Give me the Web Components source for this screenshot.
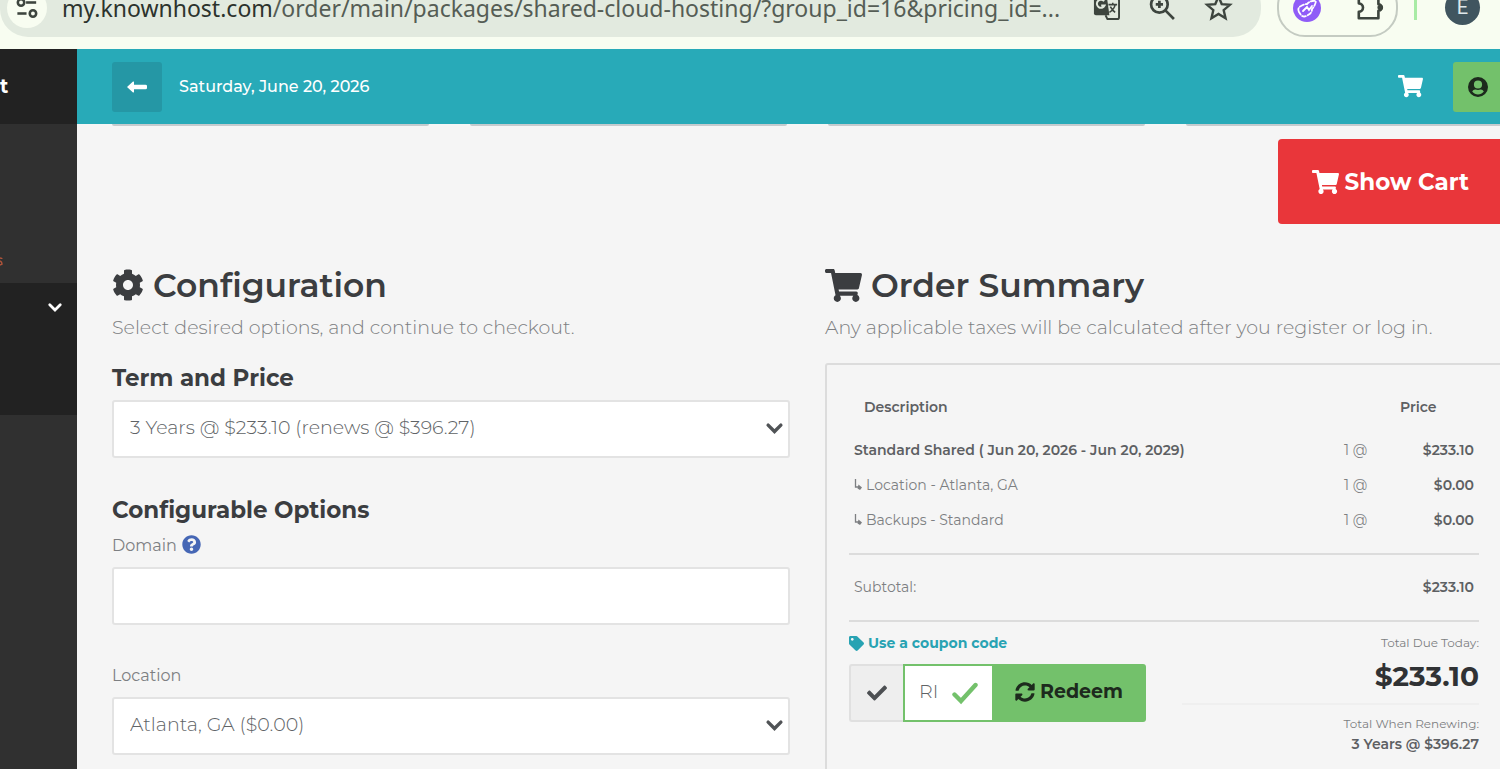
<!DOCTYPE html>
<html lang="en">
<head>
<meta charset="utf-8">
<title>Shared Cloud Hosting - Order</title>
<style>
    html, body {
        margin: 0;
        height: 100%;
    }

    body {
        display: flex;
        flex-direction: column;
        overflow: hidden;
        background: #f5f5f5;
        color: #7d7f82;
        font-family: Montserrat, Inter, "Liberation Sans", sans-serif;
        font-size: 14px;
        font-weight: 400;
    }
</style>
</head>
<body>
<browser-bar></browser-bar>
<order-page>
    <side-nav slot="side"></side-nav>
    <top-bar slot="top">Saturday, June 20, 2026</top-bar>
    <config-panel></config-panel>
    <order-summary></order-summary>
</order-page>

<script>
const ICONS = {
    cart: ['0 0 576 512', '<path d="M528.12 301.319l47.273-208C578.806 78.301 567.391 64 551.99 64H159.208l-9.166-44.81C147.758 8.021 137.93 0 126.529 0H24C10.745 0 0 10.745 0 24v16c0 13.255 10.745 24 24 24h69.883l70.248 343.435C147.325 417.1 136 435.222 136 456c0 30.928 25.072 56 56 56s56-25.072 56-56c0-15.674-6.447-29.835-16.824-40h209.647C430.447 426.165 424 440.326 424 456c0 30.928 25.072 56 56 56s56-25.072 56-56c0-22.172-12.888-41.332-31.579-50.405l5.517-24.276c3.413-15.018-8.002-29.319-23.403-29.319H218.117l-6.545-32h293.145c11.206 0 20.92-7.754 23.403-18.681z"/>'],
    cog: ['0 0 512 512', '<path d="M487.4 315.7l-42.6-24.6c4.3-23.2 4.3-47 0-70.2l42.6-24.6c4.9-2.8 7.1-8.6 5.5-14-11.1-35.6-30-67.8-54.7-94.6-3.8-4.1-10-5.1-14.8-2.3L380.8 110c-17.9-15.4-38.5-27.3-60.8-35.1V25.8c0-5.6-3.9-10.5-9.4-11.7-36.7-8.2-74.3-7.8-109.2 0-5.5 1.2-9.4 6.1-9.4 11.7V75c-22.2 7.9-42.8 19.8-60.8 35.1L88.7 85.5c-4.9-2.8-11-1.9-14.8 2.3-24.7 26.7-43.6 58.9-54.7 94.6-1.7 5.4.6 11.2 5.5 14L67.3 221c-4.3 23.2-4.3 47 0 70.2l-42.6 24.6c-4.9 2.8-7.1 8.6-5.5 14 11.1 35.6 30 67.8 54.7 94.6 3.8 4.1 10 5.1 14.8 2.3l42.6-24.6c17.9 15.4 38.5 27.3 60.8 35.1v49.2c0 5.6 3.9 10.5 9.4 11.7 36.7 8.2 74.3 7.8 109.2 0 5.5-1.2 9.4-6.1 9.4-11.7v-49.2c22.2-7.9 42.8-19.8 60.8-35.1l42.6 24.6c4.9 2.8 11 1.9 14.8-2.3 24.7-26.7 43.6-58.9 54.7-94.6 1.5-5.5-.7-11.3-5.6-14.1zM256 336c-44.1 0-80-35.9-80-80s35.9-80 80-80 80 35.9 80 80-35.9 80-80 80z"/>'],
    tag: ['0 0 512 512', '<path d="M0 252.118V48C0 21.49 21.49 0 48 0h204.118a48 48 0 0 1 33.941 14.059l211.882 211.882c18.745 18.745 18.745 49.137 0 67.882L293.823 497.941c-18.745 18.745-49.137 18.745-67.882 0L14.059 286.059A48 48 0 0 1 0 252.118zM112 64c-26.51 0-48 21.49-48 48s21.49 48 48 48 48-21.49 48-48-21.49-48-48-48z"/>'],
    check: ['0 0 512 512', '<path d="M173.898 439.404l-166.4-166.4c-9.997-9.997-9.997-26.206 0-36.204l36.203-36.204c9.997-9.998 26.207-9.998 36.204 0L192 312.69 432.095 72.596c9.997-9.997 26.207-9.997 36.204 0l36.203 36.204c9.997 9.997 9.997 26.206 0 36.204l-294.4 294.401c-9.998 9.997-26.207 9.997-36.204-.001z"/>'],
    help: ['0 0 512 512', '<path d="M504 256c0 136.997-111.043 248-248 248S8 392.997 8 256C8 119.083 119.043 8 256 8s248 111.083 248 248zM262.655 90c-54.497 0-89.255 22.957-116.549 63.758-3.536 5.286-2.353 12.415 2.715 16.258l34.699 26.31c5.205 3.947 12.621 3.008 16.665-2.122 17.864-22.658 30.113-35.797 57.303-35.797 20.429 0 45.698 13.148 45.698 32.958 0 14.976-12.363 22.667-32.534 33.976C247.128 238.528 216 254.941 216 296v4c0 6.627 5.373 12 12 12h56c6.627 0 12-5.373 12-12v-1.333c0-28.462 83.186-29.647 83.186-106.667 0-58.002-60.165-102-116.531-102zM256 338c-25.365 0-46 20.635-46 46 0 25.364 20.635 46 46 46s46-20.636 46-46c0-25.365-20.635-46-46-46z"/>'],
    sync: ['0 0 512 512', '<path d="M370.72 133.28C339.458 104.008 298.888 87.962 255.848 88c-77.458.068-144.328 53.178-162.791 126.85-1.344 5.363-6.122 9.15-11.651 9.15H24.103c-7.498 0-13.194-6.807-11.807-14.176C33.933 94.924 134.813 8 256 8c66.448 0 126.791 26.136 171.315 68.685L463.03 40.97C478.149 25.851 504 36.559 504 57.941V192c0 13.255-10.745 24-24 24H345.941c-21.382 0-32.09-25.851-16.971-40.971l41.75-41.749zM32 296h134.059c21.382 0 32.09 25.851 16.971 40.971l-41.75 41.75c31.262 29.273 71.835 45.319 114.876 45.28 77.418-.07 144.315-53.144 162.787-126.849 1.344-5.363 6.122-9.15 11.651-9.15h57.304c7.498 0 13.194 6.807 11.807 14.176C478.067 417.076 377.187 504 256 504c-66.448 0-126.791-26.136-171.315-68.685L48.97 471.03C33.851 486.149 8 475.441 8 454.059V320c0-13.255 10.745-24 24-24z"/>'],
    user: ['0 0 20 20', '<path fill-rule="evenodd" d="M10 0a10 10 0 1 0 0 20 10 10 0 0 0 0-20zM10 3.4a4.1 4.1 0 1 1 0 8.2 4.1 4.1 0 0 1 0-8.2zM4.2 14.6c.8-1.5 2-2.3 3.3-2.1 1.600.5 3.400.5 5 0 1.300-.2 2.500.6 3.300 2.100-3 4-8.600 4-11.600 0z"/>'],
    back: ['0 0 20 12', '<path d="M0 6L6 .6q1-.6 1 .6v2.600h11.500q1.500 0 1.500 1.200v2q0 1.200-1.500 1.200H7v2.600q0 1.200-1 .6z"/>'],
    down: ['0 0 16 10', '<path d="M2 2l6 6 6-6" fill="none" stroke="currentColor" stroke-width="3.200" stroke-linecap="round"/>'],
    tick: ['0 0 26 22', '<path d="M2.500 12.500l6.500 6.500L23.500 3" fill="none" stroke="currentColor" stroke-width="4.400" stroke-linecap="round"/>'],
    tune: ['0 0 24 24', '<g fill="none" stroke="currentColor" stroke-width="2.800"><circle cx="5.500" cy="6" r="3.500"/><path d="M11 6h11"/><path d="M1.500 18h10"/><circle cx="18.500" cy="18" r="3.500"/></g>'],
    translate: ['0 0 28 28', '<path d="M1 0h13l3 22H3q-2 0-2-2z"/><path d="M12 5h13q2 0 2 2v17q0 2-2 2H15l-2-4" fill="none" stroke="currentColor" stroke-width="2"/><path d="M11.500 7.500A4.200 4.200 0 1 0 12 12H8.500" fill="none" stroke="#e2eadf" stroke-width="2"/><path d="M16 11h9M20.500 9v2M23 11q-1 5-6 8M18 13q2 4 5 6" fill="none" stroke="currentColor" stroke-width="1.600"/>'],
    zoom: ['0 0 26 26', '<g fill="none" stroke="currentColor" stroke-width="2.600"><circle cx="10" cy="10" r="8"/><path d="M16 16l8 8M6.500 10h7M10 6.500v7"/></g>'],
    star: ['0 0 26 26', '<path d="M13 2.500l3.100 7.200 7.900.7-6 5.200 1.800 7.700L13 19.200l-6.800 4.100L8 15.600l-6-5.200 7.900-.7z" fill="none" stroke="currentColor" stroke-width="2.300"/>'],
    rocket: ['0 0 28 28', '<circle cx="14" cy="14" r="14" fill="#8f5cf7"/><g fill="none" stroke="#fff" stroke-width="1.800" stroke-linecap="round"><path d="M6 18q-2-4 2-6 3-2 6-2 4-4 9-3-1 5-4 8 0 4-4 6-4 3-7 0z" stroke-dasharray="4 2"/><path d="M10 17l4-4 2 3 3-4"/></g>'],
    puzzle: ['0 0 30 30', '<path d="M3 2h21v9a3 3 0 0 1 0 7v8H3v-7a4 4 0 0 0 0-9z" fill="none" stroke="currentColor" stroke-width="2.800" stroke-linejoin="round"/><circle cx="26" cy="14.500" r="3"/>'],
    speck: ['0 0 3 9', '<path d="M0 1q2 0 2 1M0 4q2 1 2 3l-2 1" fill="none" stroke="#b0543a" stroke-width="1.500"/>'],
    child: ['0 0 8 11', '<path d="M1.500 0v8H5" fill="none" stroke="currentColor" stroke-width="1.300"/><path d="M4.500 5.500L8 8.500 6 11 3.500 9.500z"/>']
}

class UiIcon extends HTMLElement {
    connectedCallback() {
        if (this.shadowRoot) return
        const [box, shape] = ICONS[this.getAttribute('name')]
        this.attachShadow({ mode: 'open' }).innerHTML = `
            <style>
                :host { display: block; flex: none; width: 20px; }
                svg { display: block; width: 100%; fill: currentColor; overflow: visible; }
            </style>
            <svg viewBox="${box}" aria-hidden="true">${shape}</svg>
        `
    }
}

// Base for the elements whose shadow root is one fixed piece of markup
class Component extends HTMLElement {
    connectedCallback() {
        if (this.shadowRoot) return
        this.attachShadow({ mode: 'open' }).innerHTML = `
            <style>
                *, :host { box-sizing: border-box; }
                button { font: inherit; color: inherit; border: 0; padding: 0; cursor: pointer; }
            </style>
            ${this.render()}
        `
    }
}

class BrowserBar extends Component {
    render() {
        return `
            <style>
                :host {
                    display: flex;
                    flex: none;
                    align-items: flex-end;
                    height: 49px;
                    padding: 0 20px 12px 0;
                    overflow: hidden;
                    background: #f8fdf1;
                    color: #3d453e;
                }
                button { display: block; flex: none; background: none; }
                .address {
                    flex: 1;
                    min-width: 0;
                    height: 59px;
                    display: flex;
                    align-items: center;
                    gap: 29px;
                    padding: 0 29px 0 7px;
                    border-radius: 0 28px 28px 28px;
                    background: #e2eadf;
                }
                .info {
                    display: grid;
                    place-items: center;
                    width: 40px;
                    height: 40px;
                    border-radius: 50%;
                    background: #f8fdf1;
                }
                .url {
                    flex: 1;
                    min-width: 0;
                    margin-left: -14px;
                    color: #555d55;
                    font: 400 23px/34px "Noto Sans", "Open Sans", sans-serif;
                    white-space: nowrap;
                }
                .url b { font-weight: 400; color: #2c332d; }
                .address ui-icon { width: 27px; }
                .address .info ui-icon { width: 22px; }
                .extensions {
                    display: flex;
                    flex: none;
                    align-items: center;
                    justify-content: space-between;
                    width: 121px;
                    height: 59px;
                    margin: 0 16px;
                    padding: 0 12px 0 14px;
                    border: 2px solid #c4cbc2;
                    border-radius: 28px;
                }
                .extensions ui-icon { width: 28px; }
                .line { width: 3px; height: 40px; margin: 0 28px 17px 0; background: #a8eba5; }
                .avatar {
                    width: 35px;
                    height: 35px;
                    margin-bottom: 12px;
                    border-radius: 50%;
                    background: #40555f;
                    color: #dfe8ea;
                    font: 400 20px/35px Roboto, sans-serif;
                }
            </style>
            <div class="address">
                <button class="info" aria-label="Site information"><ui-icon name="tune"></ui-icon></button>
                <div class="url"><b>my.knownhost.com</b>/order/main/packages/shared-cloud-hosting/?group_id=16&amp;pricing_id=...</div>
                <button aria-label="Translate"><ui-icon name="translate"></ui-icon></button>
                <button aria-label="Zoom"><ui-icon name="zoom"></ui-icon></button>
                <button aria-label="Bookmark"><ui-icon name="star"></ui-icon></button>
            </div>
            <div class="extensions">
                <button aria-label="Extension"><ui-icon name="rocket"></ui-icon></button>
                <button aria-label="Extensions"><ui-icon name="puzzle"></ui-icon></button>
            </div>
            <div class="line"></div>
            <button class="avatar">E</button>
        `
    }
}

class OrderPage extends Component {
    render() {
        return `
            <style>
                :host {
                    display: grid;
                    flex: 1;
                    min-height: 0;
                    grid-template-columns: 77px minmax(0, 1fr);
                    grid-template-rows: 75px minmax(0, 1fr);
                }
                slot[name=side]::slotted(*) { grid-row: 1 / 3; }
                main { margin-right: -3px; padding-left: 35px; }
                .cards, .panels { display: grid; }
                .cards { grid-template-columns: repeat(4, 1fr); gap: 41px; }
                .cards div { height: 2px; border-radius: 0 0 4px 4px; background: #c5cbce; }
                .panels { grid-template-columns: repeat(2, minmax(0, 1fr)); gap: 35px; }
                .actions { display: flex; justify-content: flex-end; margin: 13px 0 42px; }
                .show {
                    display: flex;
                    align-items: center;
                    gap: 6px;
                    height: 85px;
                    padding: 0 34px;
                    border-radius: 4px;
                    background: #e9363a;
                    color: #fff;
                    font-size: 23px;
                    font-weight: 700;
                }
                .show ui-icon { width: 27px; }
            </style>
            <slot name="side"></slot>
            <slot name="top"></slot>
            <main>
                <div class="cards"><div></div><div></div><div></div><div></div></div>
                <div class="actions">
                    <button class="show"><ui-icon name="cart"></ui-icon>Show Cart</button>
                </div>
                <div class="panels"><slot></slot></div>
            </main>
        `
    }
}

class SideNav extends Component {
    render() {
        return `
            <style>
                :host { display: block; overflow: hidden; background: #303030; }
                .logo {
                    height: 75px;
                    background: #222;
                    color: #fff;
                    font-size: 19px;
                    font-weight: 700;
                    line-height: 75px;
                }
                .links { display: flex; align-items: flex-end; height: 159px; padding-bottom: 17px; }
                .links ui-icon { width: 3px; }
                .group {
                    display: flex;
                    justify-content: flex-end;
                    align-items: flex-start;
                    height: 132px;
                    padding: 20px 15px;
                    background: #222;
                    color: #fff;
                }
                .group button { background: none; }
                .group ui-icon { width: 14px; }
            </style>
            <div class="logo">t</div>
            <div class="links"><ui-icon name="speck"></ui-icon></div>
            <div class="group"><button aria-label="Toggle menu"><ui-icon name="down"></ui-icon></button></div>
        `
    }
}

class TopBar extends Component {
    render() {
        return `
            <style>
                :host {
                    display: flex;
                    align-items: center;
                    margin-right: -3px;
                    padding-left: 35px;
                    background: #28aab8;
                    color: #fff;
                    font-size: 16px;
                    font-weight: 500;
                }
                button {
                    display: grid;
                    place-items: center;
                    width: 50px;
                    height: 50px;
                    border-radius: 3px;
                }
                .back { margin-right: 17px; background: #2597a5; }
                .cart { margin-left: auto; margin-right: 18px; background: none; }
                .cart ui-icon { width: 25px; }
                .user { background: #73c16b; color: #1d2a1d; }
            </style>
            <button class="back" aria-label="Back"><ui-icon name="back"></ui-icon></button>
            <slot></slot>
            <button class="cart" aria-label="Cart"><ui-icon name="cart"></ui-icon></button>
            <button class="user" aria-label="Account"><ui-icon name="user"></ui-icon></button>
        `
    }
}

class PanelTitle extends Component {
    render() {
        return `
            <style>
                :host { display: block; }
                h2 {
                    display: flex;
                    align-items: center;
                    gap: 9px;
                    margin: 0 0 11px;
                    color: #3b3d40;
                    font-size: 33px;
                    font-weight: 600;
                    line-height: 38px;
                }
                ui-icon { width: ${this.getAttribute('icon') === 'cart' ? 37 : 32}px; }
                p { margin: 0; font-size: 19px; font-weight: 300; line-height: 26px; }
            </style>
            <h2><ui-icon name="${this.getAttribute('icon')}"></ui-icon>${this.getAttribute('heading')}</h2>
            <p><slot></slot></p>
        `
    }
}

class ConfigPanel extends Component {
    render() {
        return `
            <style>
                :host { display: block; }
                h3, h3 label { color: #3b3d40; font-size: 23px; font-weight: 700; line-height: 28px; }
                h3 { margin: 23px 0 8px; }
                .field + h3 { margin: 38px 0 11px; }
                .name { display: flex; gap: 5px; margin-bottom: 11px; font-size: 16px; line-height: 21px; }
                .name ui-icon { width: 19px; color: #4667b5; }
                .field + .field { margin-top: 40px; }
                .control { position: relative; }
                .control ui-icon {
                    position: absolute;
                    right: 7px;
                    top: 23px;
                    width: 17px;
                    color: #505356;
                    pointer-events: none;
                }
                select, input {
                    display: block;
                    width: 100%;
                    height: 58px;
                    padding: 0 16px 3px;
                    border: 2px solid #e3e3e3;
                    border-radius: 3px;
                    appearance: none;
                    background: #fff;
                    color: #606366;
                    font: inherit;
                    font-size: 19px;
                    font-weight: 300;
                    outline: none;
                }
            </style>
            <panel-title icon="cog" heading="Configuration">Select desired options, and continue to checkout.</panel-title>
            <h3><label for="term">Term and Price</label></h3>
            <div class="field control">
                <select id="term"><option>3 Years @ $233.10 (renews @ $396.27)</option></select>
                <ui-icon name="down"></ui-icon>
            </div>
            <h3>Configurable Options</h3>
            <div class="field">
                <label class="name" for="domain">Domain <ui-icon name="help"></ui-icon></label>
                <input id="domain" type="text">
            </div>
            <div class="field">
                <label class="name" for="location">Location</label>
                <div class="control">
                    <select id="location"><option>Atlanta, GA ($0.00)</option></select>
                    <ui-icon name="down"></ui-icon>
                </div>
            </div>
        `
    }
}

class OrderSummary extends Component {
    render() {
        return `
            <style>
                :host { display: block; }
                .box {
                    margin-top: 22px;
                    padding: 19px 22px 40px;
                    border: 2px solid #dcdcdc;
                    border-radius: 3px;
                }
                table { width: 100%; border-collapse: collapse; table-layout: fixed; }
                th, td { height: 35px; padding: 0 5px 2px; text-align: left; }
                thead th { height: 49px; padding: 0 15px 4px; color: #5d6063; font-weight: 600; }
                tbody th { color: #5d6063; font-weight: 600; }
                td:last-child { text-align: right; color: #5d6063; font-weight: 600; }
                td ui-icon { display: inline-block; width: 8px; margin-right: 4px; }
                .qty { width: 46px; }
                .price { width: 94px; }
                hr { height: 2px; margin: 15px 0; border: 0; background: #dcdcdc; }
                hr.last { margin-bottom: 11px; }
                .bottom { display: flex; justify-content: space-between; gap: 36px; }
                a {
                    display: flex;
                    align-items: center;
                    gap: 4px;
                    margin-bottom: 11px;
                    color: #28a3b3;
                    font-weight: 700;
                    line-height: 20px;
                    text-decoration: none;
                }
                a ui-icon { width: 15px; }
                .group { display: flex; height: 58px; }
                .apply {
                    display: grid;
                    place-items: center;
                    width: 54px;
                    border: 2px solid #e0e0e0;
                    border-right: 0;
                    border-radius: 3px 0 0 3px;
                    background: #eee;
                    color: #4c4f52;
                }
                .code {
                    display: flex;
                    align-items: center;
                    width: 89px;
                    padding: 0 14px;
                    border: 2px solid #73c16b;
                    border-right: 0;
                    background: #fff;
                    color: #73c16b;
                }
                .code ui-icon { width: 26px; }
                input {
                    flex: 1;
                    min-width: 0;
                    border: 0;
                    padding: 0 0 3px;
                    outline: none;
                    background: none;
                    color: #606366;
                    font: inherit;
                    font-size: 19px;
                    font-weight: 300;
                }
                .redeem {
                    display: flex;
                    align-items: center;
                    justify-content: center;
                    gap: 5px;
                    width: 154px;
                    padding-bottom: 3px;
                    border-radius: 0 3px 3px 0;
                    background: #73c16b;
                    color: #1d2a1d;
                    font-size: 19px;
                    font-weight: 700;
                }
                .totals { flex: 1; max-width: 297px; text-align: right; line-height: 20px; }
                .totals p { margin: 0; }
                .totals p.due {
                    margin-top: 5px;
                    color: #303234;
                    font-size: 28px;
                    font-weight: 700;
                    line-height: 36px;
                }
                .totals p.note { font-size: 12px; }
                .totals hr { margin: 9px 0; background: #efefef; }
                .renew { color: #5d6063; font-weight: 600; }
            </style>
            <panel-title icon="cart" heading="Order Summary">Any applicable taxes will be calculated after you register or log in.</panel-title>
            <div class="box">
                <table>
                    <colgroup><col><col class="qty"><col class="price"></colgroup>
                    <thead><tr><th>Description</th><th></th><th>Price</th></tr></thead>
                    <tbody>
                        <tr><th>Standard Shared ( Jun 20, 2026 - Jun 20, 2029)</th><td>1 @</td><td>$233.10</td></tr>
                        <tr><td><ui-icon name="child"></ui-icon>Location - Atlanta, GA</td><td>1 @</td><td>$0.00</td></tr>
                        <tr><td><ui-icon name="child"></ui-icon>Backups - Standard</td><td>1 @</td><td>$0.00</td></tr>
                    </tbody>
                </table>
                <hr>
                <table><tr><td>Subtotal:</td><td>$233.10</td></tr></table>
                <hr class="last">
                <div class="bottom">
                    <div>
                        <a href="#"><ui-icon name="tag"></ui-icon>Use a coupon code</a>
                        <div class="group">
                            <button class="apply" aria-label="Coupon applied"><ui-icon name="check"></ui-icon></button>
                            <div class="code"><input type="text" value="RI" aria-label="Coupon code"><ui-icon name="tick"></ui-icon></div>
                            <button class="redeem"><ui-icon name="sync"></ui-icon>Redeem</button>
                        </div>
                    </div>
                    <div class="totals">
                        <p class="note">Total Due Today:</p>
                        <p class="due">$233.10</p>
                        <hr>
                        <p class="note">Total When Renewing:</p>
                        <p class="renew">3 Years @ $396.27</p>
                    </div>
                </div>
            </div>
        `
    }
}

customElements.define('ui-icon', UiIcon)
customElements.define('browser-bar', BrowserBar)
customElements.define('order-page', OrderPage)
customElements.define('side-nav', SideNav)
customElements.define('top-bar', TopBar)
customElements.define('panel-title', PanelTitle)
customElements.define('config-panel', ConfigPanel)
customElements.define('order-summary', OrderSummary)
</script>
</body>
</html>
